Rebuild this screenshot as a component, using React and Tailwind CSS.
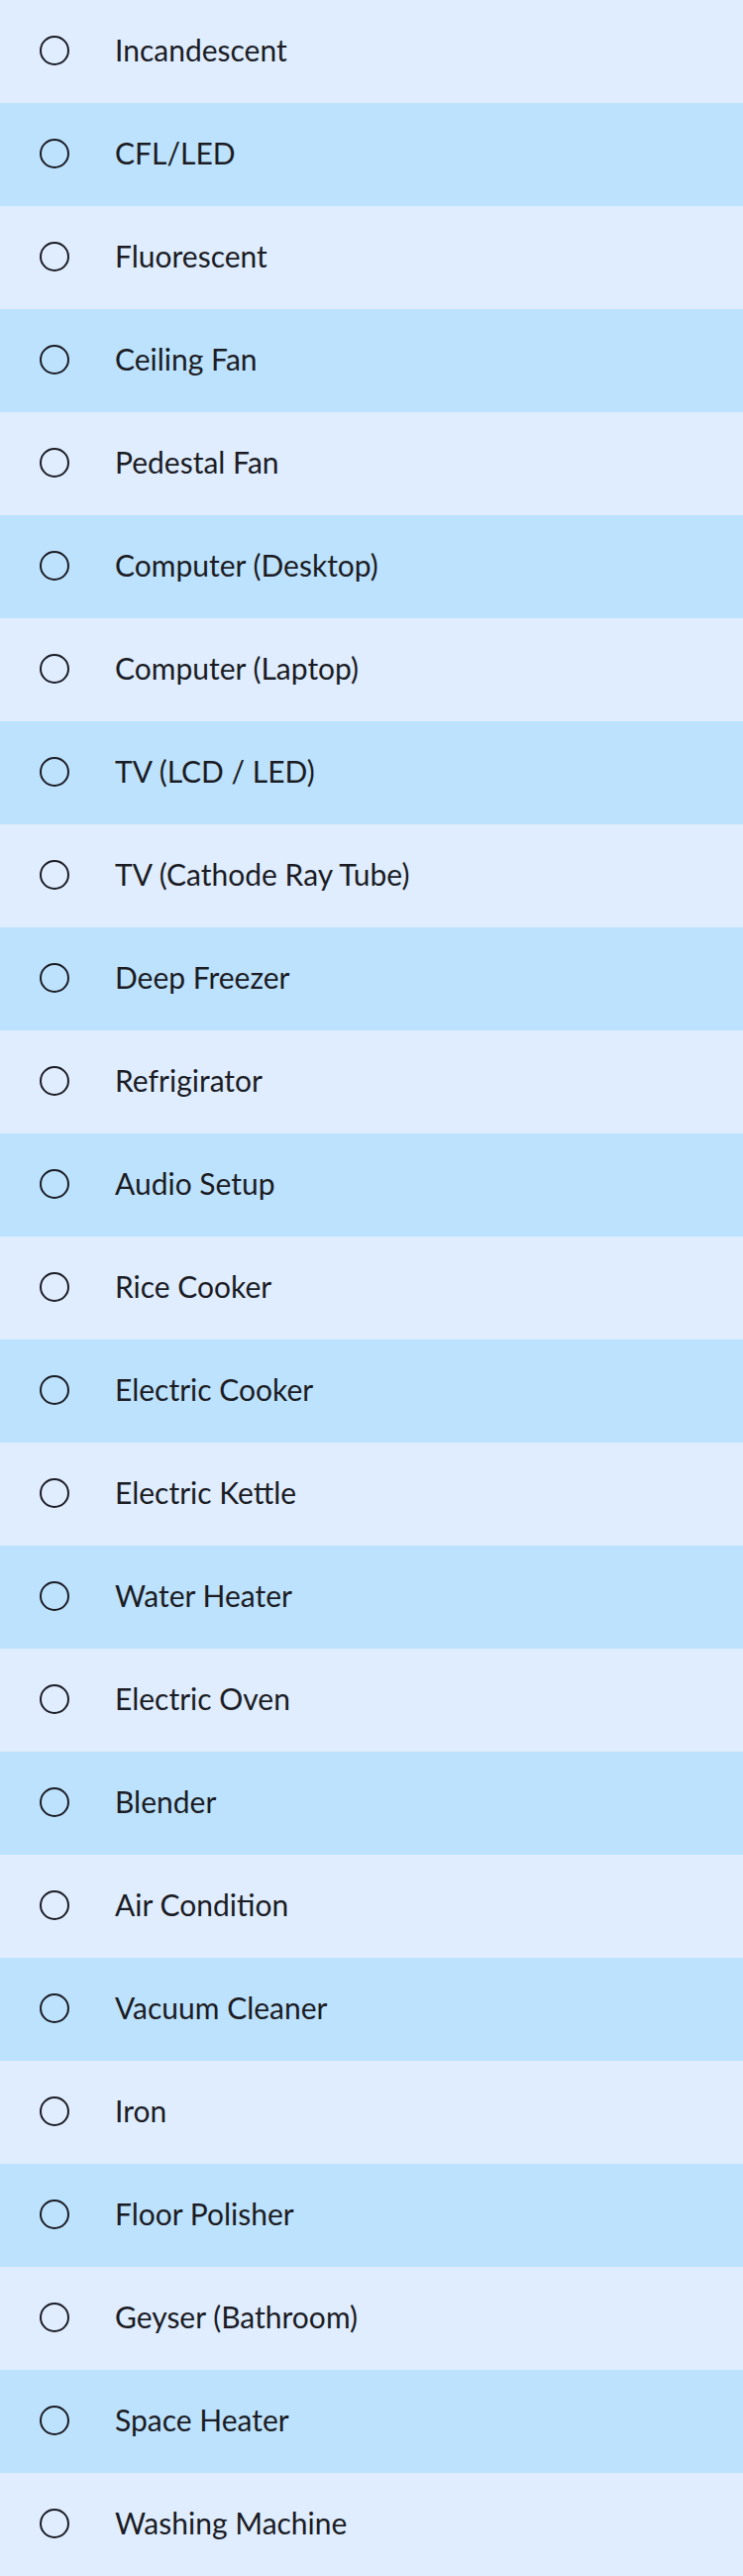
import React from 'react';

const appliances = [
  'Incandescent',
  'CFL/LED',
  'Fluorescent',
  'Ceiling Fan',
  'Pedestal Fan',
  'Computer (Desktop)',
  'Computer (Laptop)',
  'TV (LCD / LED)',
  'TV (Cathode Ray Tube)',
  'Deep Freezer',
  'Refrigirator',
  'Audio Setup',
  'Rice Cooker',
  'Electric Cooker',
  'Electric Kettle',
  'Water Heater',
  'Electric Oven',
  'Blender',
  'Air Condition',
  'Vacuum Cleaner',
  'Iron',
  'Floor Polisher',
  'Geyser (Bathroom)',
  'Space Heater',
  'Washing Machine',
];

export default function App() {
  return (
    <div className="w-[750px] font-['Lato',sans-serif] text-[#1b1c24]">
      {appliances.map((name, i) => (
        <label
          key={name}
          className={
            'flex h-[104px] items-center cursor-pointer ' +
            (i % 2 === 0 ? 'bg-[#dfedff]' : 'bg-[#bde2fd]')
          }
        >
          {/* radio */}
          <span className="ml-[40px] mb-[3px] h-[30px] w-[30px] shrink-0 rounded-full border-2 border-[#1b1c24]" />
          <span className="ml-[46px] pb-[4px] text-[30px] leading-none">{name}</span>
        </label>
      ))}
    </div>
  );
}
